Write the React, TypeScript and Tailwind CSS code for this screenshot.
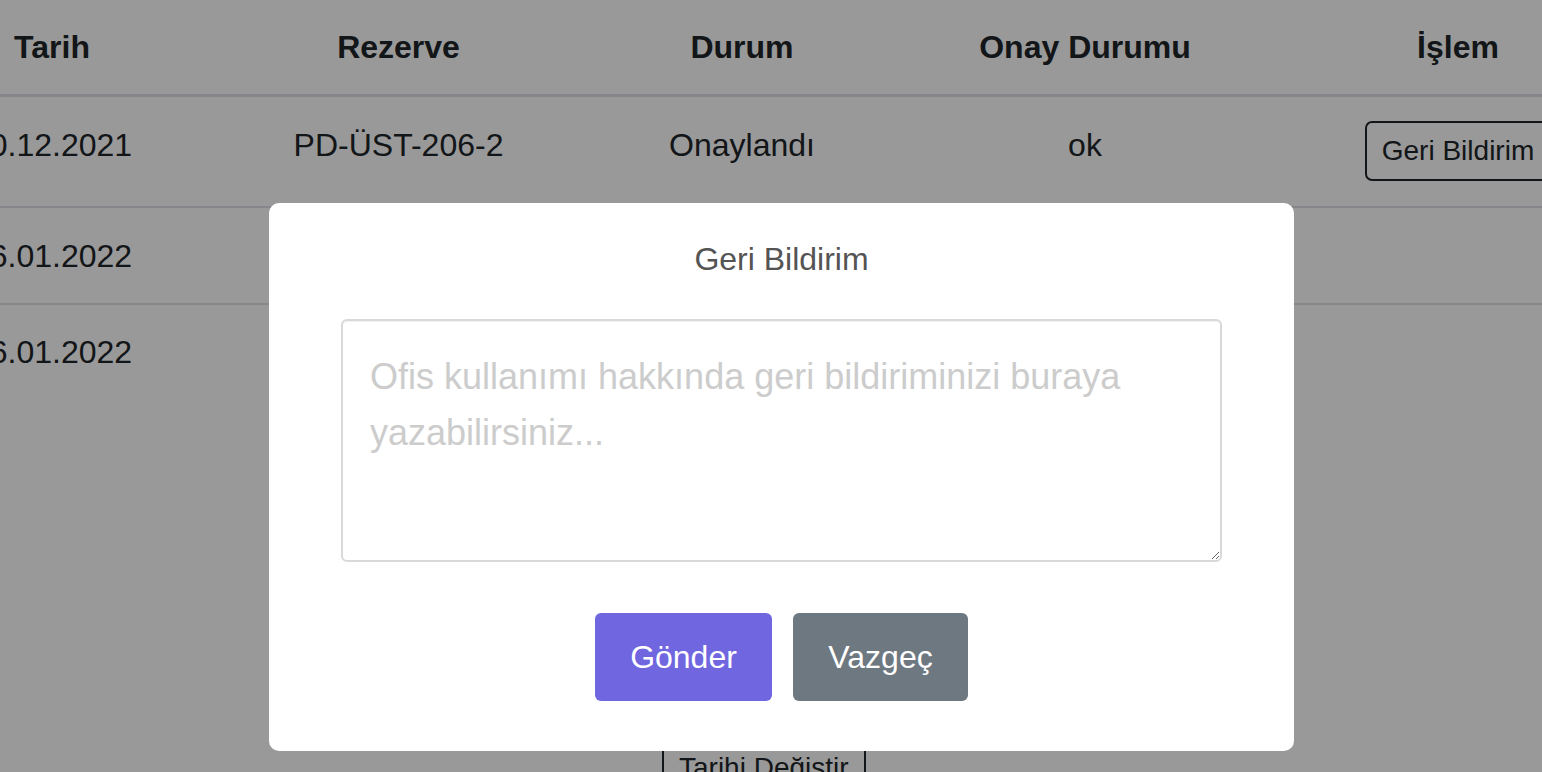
import { useState } from "react";

type Reservation = {
  id: number;
  date: string;
  room: string;
  status: string;
  approval: string;
  canReview: boolean;
  canReschedule: boolean;
};

const rows: Reservation[] = [
  { id: 1, date: "10.12.2021", room: "PD-ÜST-206-2", status: "Onaylandı", approval: "ok", canReview: true, canReschedule: false },
  { id: 2, date: "06.01.2022", room: "PD-ÜST-206-2", status: "Onaylandı", approval: "ok", canReview: false, canReschedule: false },
  { id: 3, date: "06.01.2022", room: "PD-ÜST-206-2", status: "Beklemede", approval: "-", canReview: false, canReschedule: true },
];

const cols = "grid grid-cols-[348px_345px_342px_344px_402px]";
const font = "font-['Liberation_Sans',Arial,sans-serif]";

function OutlineButton({ children }: { children: string }) {
  return (
    <button className="h-[60px] px-[15px] border-2 border-[#212529] rounded-[7px] text-[28px] leading-none text-[#212529] whitespace-nowrap bg-transparent">
      {children}
    </button>
  );
}

function ReservationTable() {
  return (
    <div className="w-[1781px] -ml-[122px] text-[#212529]">
      <div className={`${cols} h-[97px] border-b-[3px] border-[#dee2e6] items-center text-[32px] font-bold`}>
        <span className="text-center">Tarih</span>
        <span className="text-center">Rezerve</span>
        <span className="text-center">Durum</span>
        <span className="text-center">Onay Durumu</span>
        <span className="text-center">İşlem</span>
      </div>

      {rows.map((r, i) => (
        <div
          key={r.id}
          className={`${cols} text-[32px] leading-[48px] ${
            i === 0 ? "pt-[24px] pb-[25px]" : i === 1 ? "pt-[24px] pb-[23px]" : "pt-[23px] pb-[40px]"
          } ${i < rows.length - 1 ? "border-b-2 border-[#dee2e6]" : ""}`}
        >
          <span className="text-center">{r.date}</span>
          <span className="text-center">{r.room}</span>
          <div className="flex flex-col">
            <span className="text-center">{r.status}</span>
            {r.canReschedule && (
              <div className="mt-[362px] ml-[91px]">
                <OutlineButton>Tarihi Değiştir</OutlineButton>
              </div>
            )}
          </div>
          <span className="text-center">{r.approval}</span>
          <div className="flex justify-center">
            {r.canReview && <OutlineButton>Geri Bildirim</OutlineButton>}
          </div>
        </div>
      ))}
    </div>
  );
}

function FeedbackDialog() {
  const [text, setText] = useState("");
  return (
    <div className="fixed inset-0 bg-black/40 flex justify-center items-start pt-[203px] pl-[21px]">
      <div className="w-[1025px] h-[548px] bg-white rounded-[10px] flex flex-col items-center pt-[37px]">
        <h2 className="text-[32px] leading-[38px] text-[#545454] font-normal">Geri Bildirim</h2>
        <textarea
          value={text}
          onChange={(e) => setText(e.target.value)}
          placeholder="Ofis kullanımı hakkında geri bildiriminizi buraya yazabilirsiniz..."
          className="mt-[41px] w-[881px] h-[243px] border-2 border-[#d9d9d9] rounded-[6px] shadow-[inset_0_1px_1px_rgba(0,0,0,0.06)] px-[27px] pt-[28px] text-[36px] leading-[56px] text-[#545454] placeholder:text-[#cccccc] outline-none resize"
        />
        <div className="mt-[51px] flex gap-[21px]">
          <button className="w-[177px] h-[88px] rounded-[6px] bg-[#7066e0] text-white text-[32px]">Gönder</button>
          <button className="w-[175px] h-[88px] rounded-[6px] bg-[#6e7881] text-white text-[32px]">Vazgeç</button>
        </div>
      </div>
    </div>
  );
}

export default function App() {
  return (
    <div className={`${font} w-full h-screen overflow-hidden bg-white`}>
      <ReservationTable />
      <FeedbackDialog />
    </div>
  );
}
